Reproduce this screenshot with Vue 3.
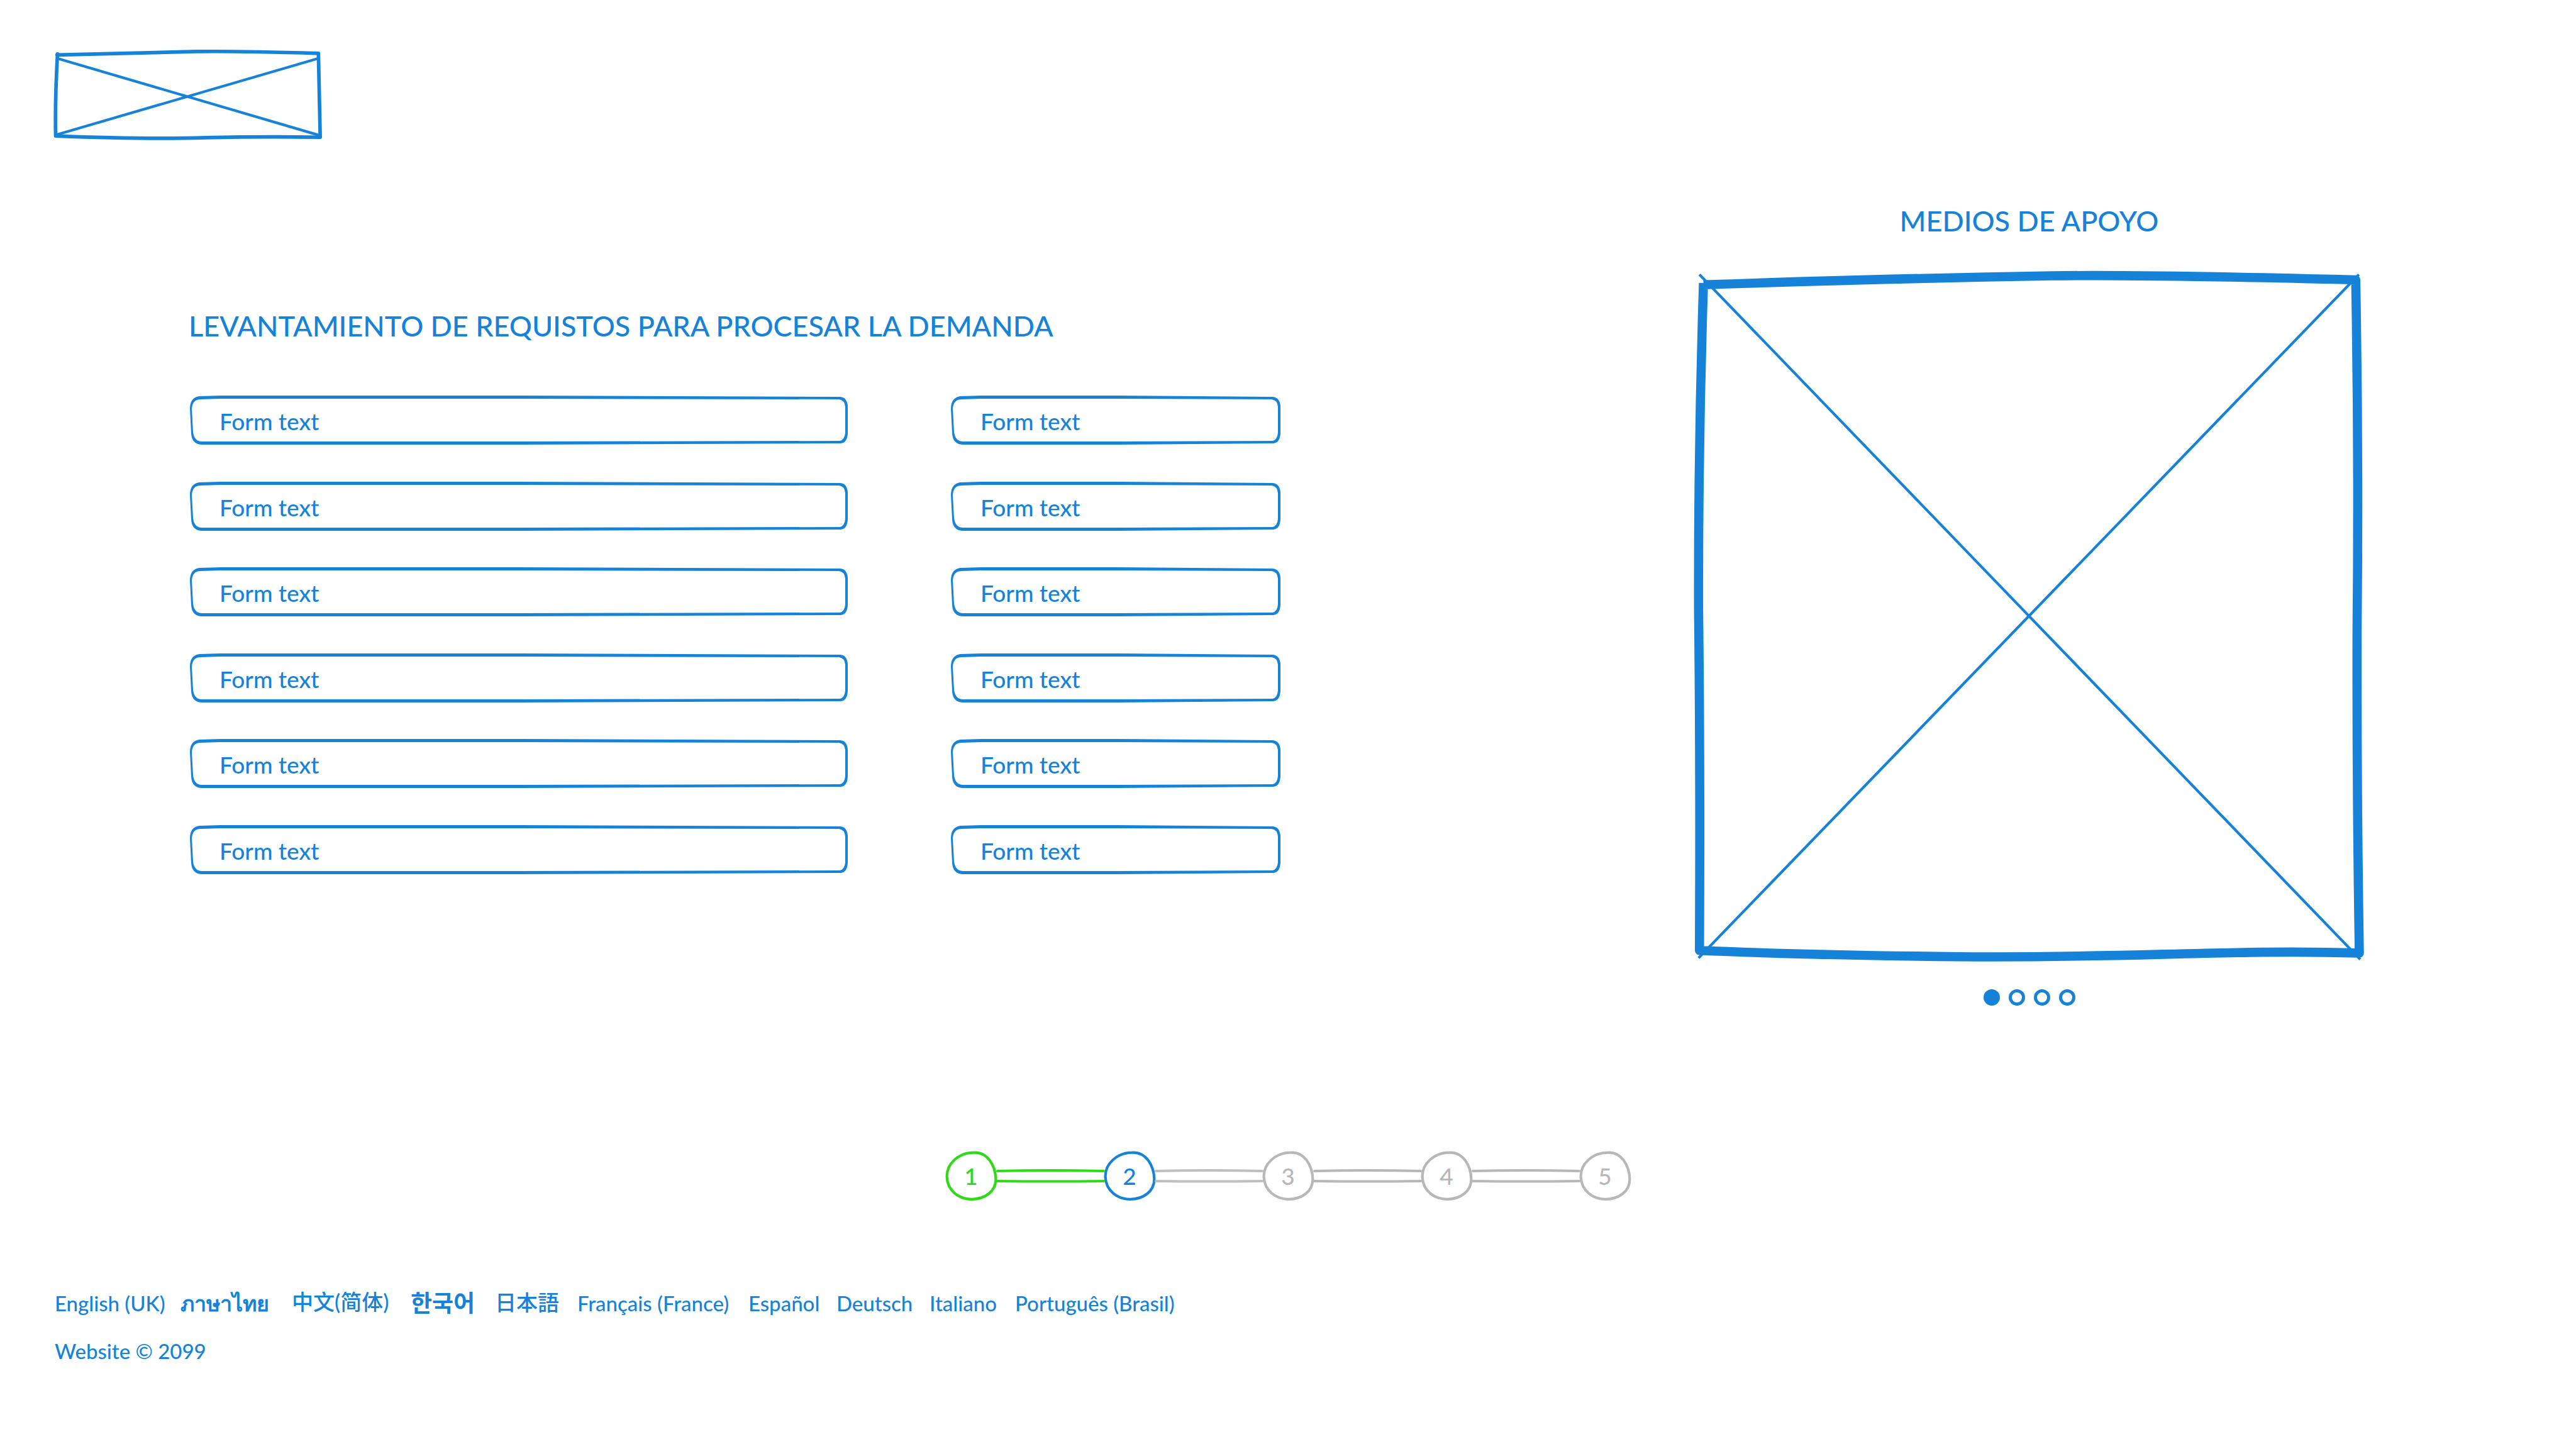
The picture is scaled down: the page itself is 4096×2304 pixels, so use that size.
<script setup>
import { reactive, ref } from 'vue'

const fields = reactive(
  Array.from({ length: 6 }, () => ({ main: 'Form text', side: 'Form text' }))
)

const steps = [
  { number: 1, state: 'done' },
  { number: 2, state: 'current' },
  { number: 3, state: 'pending' },
  { number: 4, state: 'pending' },
  { number: 5, state: 'pending' }
]

const languages = [
  { label: 'English (UK)', lang: 'en' },
  { label: 'ภาษาไทย', lang: 'th' },
  { label: '中文(简体)', lang: 'zh' },
  { label: '한국어', lang: 'ko' },
  { label: '日本語', lang: 'ja' },
  { label: 'Français (France)', lang: 'fr' },
  { label: 'Español', lang: 'es' },
  { label: 'Deutsch', lang: 'de' },
  { label: 'Italiano', lang: 'it' },
  { label: 'Português (Brasil)', lang: 'pt' }
]

const slide = ref(0)

// Hand-drawn frame: outer and inner outline of a slightly skewed rounded box
const frame = (w) =>
  `M50 0H${w / 2}L${w - 14} 2Q${w - 3} 3 ${w - 2} 17V60Q${w - 3} 75 ${w - 13} 76L${w / 2} 78H20` +
  `Q5 77 4 60L2 21Q2 3 17 1Z` +
  `M50 5H${w / 2}L${w - 16} 6Q${w - 7} 7 ${w - 6} 18V59Q${w - 7} 71 ${w - 15} 72L${w / 2} 73H21` +
  `Q9 73 7 58L5 21Q6 6 19 6Z`
</script>

<template>
  <div class="page">
    <header>
      <a href="#" class="logo" aria-label="Inicio">
        <svg viewBox="0 0 600 205" fill="none" stroke="currentColor" stroke-linecap="round" stroke-linejoin="round">
          <path stroke-width="8" d="M8 13Q170 9 320 5.500Q400 4 592 9.500L596 197Q470 195 340 198Q200 202 5 194Q3 120 9 11" />
          <path stroke-width="6" d="M13 22L595 193M591 21L8 191" />
        </svg>
      </a>
    </header>

    <main>
      <form @submit.prevent>
        <h1>LEVANTAMIENTO DE REQUISTOS PARA PROCESAR LA DEMANDA</h1>
        <div class="fields">
          <template v-for="(row, i) in fields" :key="i">
            <label class="field">
              <svg viewBox="0 0 1050 79" preserveAspectRatio="none" aria-hidden="true"><path :d="frame(1050)" /></svg>
              <input v-model="row.main" type="text" :aria-label="`Requisito ${i + 1}`" />
            </label>
            <label class="field">
              <svg viewBox="0 0 528 79" preserveAspectRatio="none" aria-hidden="true"><path :d="frame(528)" /></svg>
              <input v-model="row.side" type="text" :aria-label="`Detalle ${i + 1}`" />
            </label>
          </template>
        </div>
      </form>

      <section class="media">
        <h2>MEDIOS DE APOYO</h2>
        <svg class="picture" viewBox="-2 0 1500 1550" fill="none" stroke="currentColor" aria-hidden="true">
          <path
            stroke-width="20.500" stroke-linejoin="round"
            d="M20 32Q440 18 800 12Q1000 9 1478 21Q1485 420 1481 800Q1480 1150 1486 1526C1200 1517 960 1538 590 1534C400 1532 150 1526 11 1520Q13 1100 9 760Q8 400 20 28"
          />
          <path stroke-width="6" d="M11 9L1488 1540M1485 9L9 1537" />
        </svg>
        <div class="dots">
          <button
            v-for="n in 4" :key="n" type="button" :class="{ active: slide === n - 1 }"
            :aria-label="`Imagen ${n}`" @click="slide = n - 1"
          ></button>
        </div>
      </section>
    </main>

    <ol class="steps">
      <li v-for="(step, i) in steps" :key="step.number" :class="step.state">
        <svg v-if="i" class="link" :class="`after-${steps[i - 1].state}`" viewBox="0 0 173 42" preserveAspectRatio="none" aria-hidden="true">
          <path d="M2 13Q85 11 171 13M2 29Q85 30 171 29" />
        </svg>
        <button type="button">
          <svg viewBox="0 0 120 116" aria-hidden="true">
            <path d="M66 5C96 4 114 33 115 65C115 92 91 110 61 110C31 110 6 90 5 60C4 30 32 5 66 5Z" />
          </svg>
          <span>{{ step.number }}</span>
        </button>
      </li>
    </ol>

    <footer>
      <nav>
        <a v-for="l in languages" :key="l.lang" href="#" :lang="l.lang">{{ l.label }}</a>
      </nav>
      <p>Website © 2099</p>
    </footer>
  </div>
</template>

<style>
body {
  margin: 0;
  background: #fff;
}
</style>

<style scoped>
.page {
  --blue: #1683d9;
  --green: #2fda16;
  --gray: #b8b8b8;
  box-sizing: border-box;
  min-height: 100vh;
  padding: 78px 0 104px;
  color: var(--blue);
  font-family: Lato, "Noto Sans CJK SC", sans-serif;
  font-weight: 500;
}

svg {
  display: block;
  overflow: visible;
}

button,
input {
  margin: 0;
  padding: 0;
  border: 0;
  background: none;
  color: inherit;
  font: inherit;
}

header {
  display: flex;
  padding: 0 85px;
}

.logo {
  color: inherit;
}

.logo svg {
  width: 427px;
  height: 146px;
}

main {
  display: grid;
  grid-template-columns: 1738fr 1067fr;
  column-gap: 655px;
  padding: 99px 336px 0 300px;
}

h1,
h2 {
  margin: 0;
  font-size: 45px;
  font-weight: 500;
  line-height: 56px;
  white-space: nowrap;
}

form {
  padding-top: 167px;
}

.fields {
  display: grid;
  grid-template-columns: 1050fr 528fr;
  grid-auto-rows: 79px;
  column-gap: 160px;
  align-content: space-between;
  min-height: 762px;
  margin-top: 83px;
}

.field {
  display: grid;
}

.field > * {
  grid-area: 1 / 1;
  min-width: 0;
  width: 100%;
  height: 79px;
}

.field path {
  fill: currentColor;
  fill-rule: evenodd;
}

.field input {
  box-sizing: border-box;
  padding: 2px 49px 0;
  font-size: 37px;
  outline: none;
}

.media {
  display: flex;
  flex-direction: column;
  align-items: center;
}

.picture {
  width: 100%;
  height: auto;
  margin-top: 51px;
}

.dots {
  display: flex;
  gap: 14px;
  margin-top: 40px;
}

.dots button {
  box-sizing: border-box;
  width: 26px;
  height: 26px;
  border: 5px solid var(--blue);
  border-radius: 50%;
}

.dots .active {
  background: var(--blue);
}

.steps {
  display: flex;
  justify-content: center;
  margin: 230px 0 0;
  padding: 0;
  list-style: none;
}

.steps li {
  display: flex;
  align-items: center;
}

.steps button {
  display: grid;
  place-items: center;
  width: 85px;
  height: 82px;
  font-size: 37px;
  line-height: 44px;
}

.steps button > * {
  grid-area: 1 / 1;
}

.steps button svg {
  width: 85px;
  height: 82px;
  fill: #fff;
  stroke: currentColor;
  stroke-width: 6;
}

.steps .link {
  z-index: 1;
  width: 173px;
  height: 42px;
  margin: 0 -3px;
  fill: none;
  stroke: var(--gray);
  stroke-width: 4;
  stroke-linecap: round;
}

.done {
  color: var(--green);
}

.current {
  color: var(--blue);
}

.pending {
  color: var(--gray);
}

.steps .after-done {
  stroke: var(--green);
}

.steps .after-current {
  stroke: #bfbfbf;
}

footer {
  padding: 0 87px;
  margin-top: 141px;
  font-size: 33px;
  line-height: 40px;
}

nav {
  display: grid;
  grid-template-columns: 200px 177px 189px 134px 131px 272px 140px 148px 136px auto;
  justify-content: start;
  height: 40px;
}

nav a {
  color: inherit;
  text-decoration: none;
  white-space: nowrap;
}

nav a:lang(th),
nav a:lang(ko) {
  font-weight: 700;
}

nav a:lang(th),
nav a:lang(zh),
nav a:lang(ja) {
  font-size: 34px;
}

nav a:lang(zh),
nav a:lang(ko),
nav a:lang(ja) {
  line-height: 36px;
}

nav a:lang(ko) {
  font-family: "Noto Sans CJK KR", sans-serif;
  font-size: 37px;
}

nav a:lang(ja) {
  font-family: "Noto Sans CJK JP", sans-serif;
}

footer p {
  margin: 36px 0 0;
}
</style>
